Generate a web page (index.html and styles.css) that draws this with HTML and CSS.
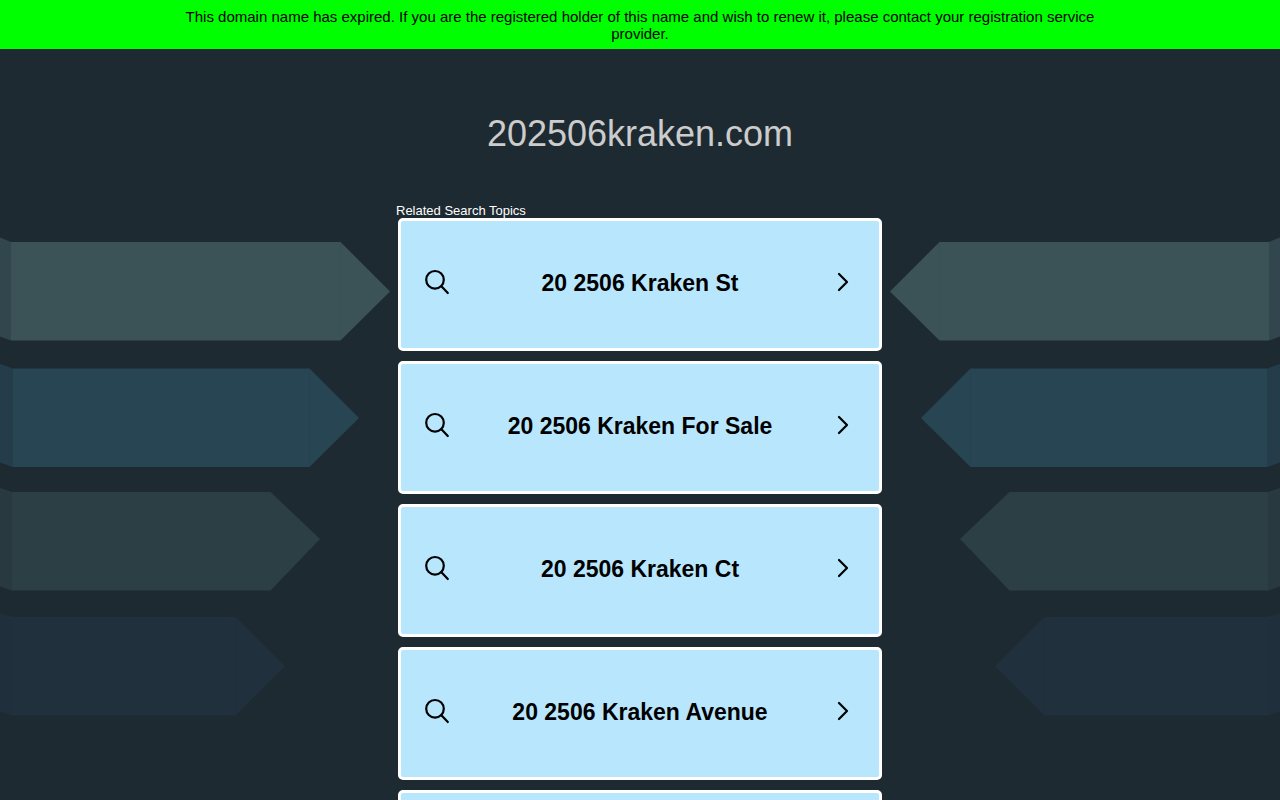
FILE: index.html
```
<!DOCTYPE html>
<html lang="en">

<head>
    <meta charset="utf-8" />
    <title>202506kraken.com</title>
    <meta name="viewport" content="width=device-width, initial-scale=1.0">
    <link rel="stylesheet" href="styles.css">
</head>

<body>
    <!-- Shared icons -->
    <svg class="sprite" aria-hidden="true">
        <symbol id="icon-search" viewBox="0 0 26 26">
            <circle cx="11" cy="10.8" r="8.8" stroke-width="2.2" />
            <path d="M17.400 17.200L23.800 24" stroke-width="2.2" />
        </symbol>
        <symbol id="icon-chevron" viewBox="0 0 12 20">
            <path d="M2 2L10 10L2 18" stroke-width="2.2" />
        </symbol>
    </svg>

    <div class="banner">
        <p class="banner-text">This domain name has expired. If you are the registered holder of this name and wish to renew it, please contact your registration service provider.</p>
    </div>

    <h1 class="domain">202506kraken.com</h1>

    <div class="content">
        <!-- Left arrows -->
        <svg class="arrows" viewBox="0 0 390 480" width="390" height="480" aria-hidden="true">
            <g id="arrow-set">
                <path fill="#32464d" d="M0 0.5L11 5V103.5L0 99.5z" />
                <path fill="#3b5356" d="M11 5H340.5L390 54.5L340.5 103.5H11z" />
                <path fill="none" stroke="#375054" d="M340.5 5V103" />
                <path fill="#253d4a" d="M0 127L13 131.500V230L0 225.500z" />
                <path fill="#284553" d="M13 131.500H309.500L359 181L309.500 230H13z" />
                <path fill="none" stroke="#27414f" d="M309.500 132V229" />
                <path fill="#283940" d="M0 251L12 255V353.500L0 349.500z" />
                <path fill="#2c3f44" d="M12 255H270.500L320 302L270.500 353.500H12z" />
                <path fill="#1f2f3b" d="M0 376L12 380V478.500L0 474.500z" />
                <path fill="#20313d" d="M12 380H235.500L285 429.500L235.500 478.500H12z" />
                <path fill="none" stroke="#1f2f3a" d="M235.500 381V478" />
            </g>
        </svg>

        <div class="topics">
            <h2 class="topics-title">Related Search Topics</h2>
            <a class="card" href="#">
                <svg class="icon-search"><use href="#icon-search" /></svg>
                <span class="card-text">20 2506 Kraken St</span>
                <svg class="icon-chevron"><use href="#icon-chevron" /></svg>
            </a>
            <a class="card" href="#">
                <svg class="icon-search"><use href="#icon-search" /></svg>
                <span class="card-text">20 2506 Kraken For Sale</span>
                <svg class="icon-chevron"><use href="#icon-chevron" /></svg>
            </a>
            <a class="card" href="#">
                <svg class="icon-search"><use href="#icon-search" /></svg>
                <span class="card-text">20 2506 Kraken Ct</span>
                <svg class="icon-chevron"><use href="#icon-chevron" /></svg>
            </a>
            <a class="card" href="#">
                <svg class="icon-search"><use href="#icon-search" /></svg>
                <span class="card-text">20 2506 Kraken Avenue</span>
                <svg class="icon-chevron"><use href="#icon-chevron" /></svg>
            </a>
            <a class="card" href="#" aria-label="More topics"></a>
        </div>

        <!-- Right arrows, mirrored -->
        <svg class="arrows arrows-right" viewBox="0 0 390 480" width="390" height="480" aria-hidden="true">
            <use href="#arrow-set" transform="translate(390 0) scale(-1 1)" />
        </svg>
    </div>
</body>

</html>
```
FILE: styles.css
```
* {
    box-sizing: border-box;
    margin: 0;
    padding: 0;
}

body {
    background-color: #1e2a32;
    font-family: "Liberation Sans", Arial, sans-serif;
}

.sprite {
    display: none;
}

.banner {
    padding: 8px 0 7px;
    background-color: #00ff00;
}

.banner-text {
    width: 75%;
    margin: 0 auto;
    color: #000;
    font-size: 15px;
    line-height: 17px;
    text-align: center;
}

.domain {
    padding: 64px 0 48px;
    color: #ccc;
    font-size: 36px;
    font-weight: normal;
    line-height: 42px;
    text-align: center;
}

.content {
    display: grid;
    grid-template-columns: minmax(0, 1fr) minmax(0, 484px) minmax(0, 1fr);
}

.arrows {
    margin-top: 34px;
}

.arrows-right {
    justify-self: end;
}

.topics {
    display: flex;
    flex-direction: column;
    gap: 10px;
}

.topics-title {
    margin: 0 0 -10px -2px;
    color: #fff;
    font-size: 13px;
    font-weight: normal;
    line-height: 15px;
}

.card {
    display: flex;
    align-items: center;
    height: 133px;
    padding: 0 30px 3px 23px;
    border: 3px solid #fff;
    border-radius: 5px;
    background-color: #b8e6fd;
    color: #000;
    font-size: 23px;
    font-weight: bold;
    line-height: 28px;
    text-align: center;
    text-decoration: none;
}

.card:hover {
    background-color: #d4f0fe;
}

.card-text {
    flex: 1;
}

.icon-search,
.icon-chevron {
    fill: none;
    stroke: #000;
    stroke-linecap: round;
    stroke-linejoin: round;
    margin-bottom: 3px;
}

.icon-search {
    width: 26px;
    height: 26px;
}

.icon-chevron {
    width: 12px;
    height: 20px;
    margin-left: 7px;
}

@media (max-width: 900px) {
    .content {
        grid-template-columns: minmax(0, 484px);
        justify-content: center;
        padding: 0 10px;
    }

    .arrows {
        display: none;
    }
}
```
